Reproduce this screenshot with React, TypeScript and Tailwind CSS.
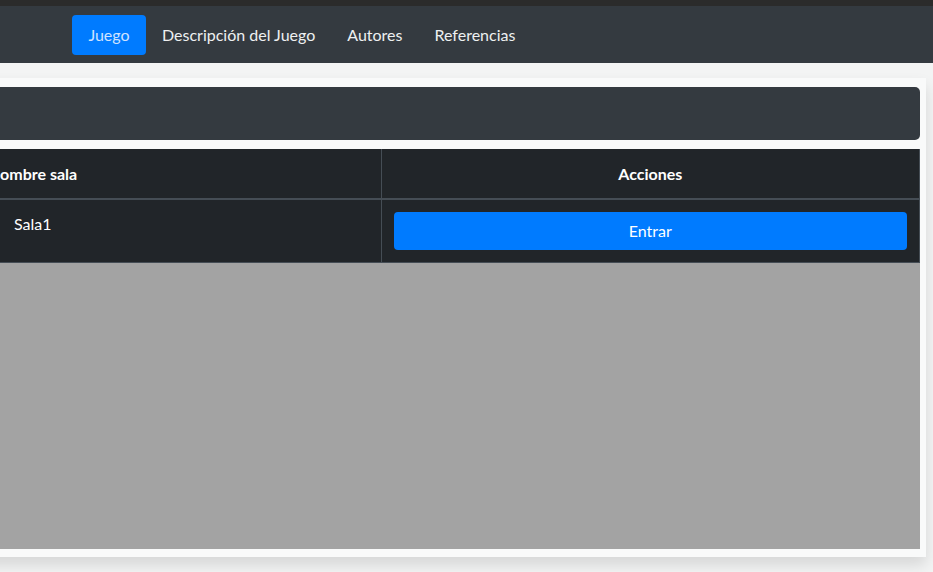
import React from 'react'

const links = ['Descripción del Juego', 'Autores', 'Referencias']

export default function App() {
  return (
    <div className="w-[933px] h-[572px] overflow-hidden bg-[#f3f4f4] font-['Lato','Liberation_Sans',sans-serif] text-[16px]">
      <div className="h-[6px] bg-[#2b2b2b]" />
      <nav className="h-[57px] bg-[#343a40] flex items-center pl-[72px]">
        <a href="#" className="h-[40px] w-[74px] flex items-center justify-center rounded-[4px] bg-[#007bff] text-[#cfe3ff]">
          Juego
        </a>
        {links.map((l) => (
          <a key={l} href="#" className="h-[40px] px-[16px] flex items-center text-[#eef0f1]">
            {l}
          </a>
        ))}
      </nav>

      <main className="pt-[15px]">
        <div className="-ml-[20px] mr-[7px] bg-[#f9fafa] pt-[9px] pr-[6px] pb-[8px] shadow-[0_8px_14px_rgba(0,0,0,0.12)]">
          <div className="h-[53px] bg-[#343a40] rounded-[5px]" />

          <table className="mt-[9px] w-full border-collapse bg-[#212529] text-white">
            <thead>
              <tr className="h-[50px] border-b-2 border-[#454d55]">
                <th className="w-[401px] text-left font-bold border-r border-[#454d55]">
                  <span className="pl-[8px]">Nombre sala</span>
                </th>
                <th className="text-center font-bold border-r border-[#454d55]">Acciones</th>
              </tr>
            </thead>
            <tbody>
              <tr className="border-b border-[#454d55]">
                <td className="align-top pt-[12px] pl-[34px] leading-[24px] border-r border-[#454d55]">Sala1</td>
                <td className="px-[12px] py-[12px] border-r border-[#454d55]">
                  <button className="w-full h-[38px] rounded-[4px] bg-[#007bff] text-white">Entrar</button>
                </td>
              </tr>
            </tbody>
          </table>

          <div className="h-[286px] bg-[#a3a3a3]" />
        </div>
      </main>
    </div>
  )
}
